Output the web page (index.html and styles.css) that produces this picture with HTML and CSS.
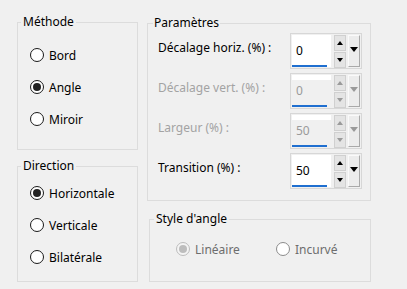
FILE: index.html
```html
<!DOCTYPE html>
<html lang="fr">
<head>
  <meta charset="UTF-8">
  <title>Dégradé - Paramètres</title>
  <link rel="stylesheet" href="styles.css">
</head>
<body>
  <div class="dialog">
    <!-- Colonne gauche -->
    <div class="col col-left">
      <fieldset class="group methode">
        <legend>Méthode</legend>
        <div class="radio-list">
          <label class="option"><span class="radio"></span>Bord</label>
          <label class="option"><span class="radio on"></span>Angle</label>
          <label class="option"><span class="radio"></span>Miroir</label>
        </div>
      </fieldset>

      <fieldset class="group direction">
        <legend>Direction</legend>
        <div class="radio-list">
          <label class="option"><span class="radio on"></span>Horizontale</label>
          <label class="option"><span class="radio"></span>Verticale</label>
          <label class="option"><span class="radio"></span>Bilatérale</label>
        </div>
      </fieldset>
    </div>

    <!-- Colonne droite -->
    <div class="col col-right">
      <fieldset class="group params">
        <legend>Paramètres</legend>
        <div class="rows">
          <div class="row">
            <span class="row-label">Décalage horiz. (%) :</span>
            <div class="spin">
              <div class="field"><span class="value">0</span><span class="underline"></span></div>
              <div class="arrows">
                <span class="arrow-btn"><span class="tri-up"></span></span>
                <span class="arrow-btn"><span class="tri-down"></span></span>
              </div>
              <div class="drop"><span class="tri-drop"></span></div>
            </div>
          </div>
          <div class="row disabled">
            <span class="row-label">Décalage vert. (%) :</span>
            <div class="spin">
              <div class="field"><span class="value">0</span><span class="underline"></span></div>
              <div class="arrows">
                <span class="arrow-btn"><span class="tri-up"></span></span>
                <span class="arrow-btn"><span class="tri-down"></span></span>
              </div>
              <div class="drop"><span class="tri-drop"></span></div>
            </div>
          </div>
          <div class="row disabled">
            <span class="row-label">Largeur (%) :</span>
            <div class="spin">
              <div class="field"><span class="value">50</span><span class="underline"></span></div>
              <div class="arrows">
                <span class="arrow-btn"><span class="tri-up"></span></span>
                <span class="arrow-btn"><span class="tri-down"></span></span>
              </div>
              <div class="drop"><span class="tri-drop"></span></div>
            </div>
          </div>
          <div class="row">
            <span class="row-label">Transition (%) :</span>
            <div class="spin">
              <div class="field"><span class="value">50</span><span class="underline"></span></div>
              <div class="arrows">
                <span class="arrow-btn"><span class="tri-up"></span></span>
                <span class="arrow-btn"><span class="tri-down"></span></span>
              </div>
              <div class="drop"><span class="tri-drop"></span></div>
            </div>
          </div>
        </div>
      </fieldset>

      <fieldset class="group style-angle">
        <legend>Style d'angle</legend>
        <div class="inline-options">
          <label class="option muted"><span class="radio on dim"></span>Linéaire</label>
          <label class="option muted"><span class="radio dim-empty"></span>Incurvé</label>
        </div>
      </fieldset>
    </div>
  </div>
</body>
</html>
```

FILE: styles.css
```css
/* Styles généraux */
* {
  box-sizing: border-box;
}

body {
  margin: 0;
  background-color: #f0f0f0;
  color: #000;
  font-family: "Noto Sans", "Open Sans", sans-serif;
  font-size: 12px;
}

.dialog {
  display: flex;
  gap: 9px;
  padding: 15px 0 0 17px;
}

.col {
  display: flex;
  flex-direction: column;
}

.col-left {
  width: 121px;
  gap: 9px;
}

.col-right {
  width: 224px;
  padding-top: 1px;
  gap: 11px;
}

/* Cadres de groupe */
.group {
  margin: 0;
  padding: 0 0 0 3px;
  border: 1px solid #dcdcdc;
  min-width: 0;
}

.group legend {
  padding: 0 2px;
  font-size: 12px;
  line-height: 14px;
}

.methode {
  height: 135px;
}

.methode .radio-list {
  padding-top: 10px;
}

.direction {
  height: 123px;
}

.direction .radio-list {
  padding-top: 4px;
}

.params {
  height: 185px;
  padding-left: 5px;
}

.params legend {
  padding: 0 1px;
}

.style-angle {
  height: 70px;
  margin-left: 2px;
  padding-left: 4px;
}

/* Boutons radio */
.radio-list {
  display: flex;
  flex-direction: column;
  padding-left: 9px;
}

.option {
  display: flex;
  align-items: center;
  gap: 5px;
  height: 32px;
}

.radio {
  width: 14px;
  height: 14px;
  border: 1px solid #1a1a1a;
  border-radius: 50%;
  background-color: #fff;
  display: flex;
  align-items: center;
  justify-content: center;
}

.radio.on::after {
  content: "";
  width: 8px;
  height: 8px;
  border-radius: 50%;
  background-color: #222;
}

.radio.dim {
  border-color: #bdbdbd;
  background-color: #f4f4f4;
}

.radio.dim::after {
  background-color: #bdbdbd;
}

.radio.dim-empty {
  border-color: #8c8c8c;
}

.option.muted {
  color: #6d6d6d;
}

.inline-options {
  display: grid;
  grid-template-columns: 100px 100px;
  padding: 7px 0 0 22px;
}

/* Lignes de paramètres */
.rows {
  display: flex;
  flex-direction: column;
  gap: 4px;
  padding-top: 3px;
}

.row {
  display: flex;
  align-items: center;
  justify-content: space-between;
  padding-left: 5px;
  padding-right: 8px;
}

.row-label {
  padding-bottom: 8px;
}

.row.disabled .row-label {
  color: #a3a3a3;
}

/* Champ numérique */
.spin {
  display: flex;
  align-items: flex-start;
  width: 72px;
  height: 36px;
  padding: 1px;
  border: 1px solid #d7d7d7;
  background-color: #f0f0f0;
}

.field {
  width: 41px;
  height: 32px;
  background-color: #fff;
  display: flex;
  flex-direction: column;
  justify-content: flex-end;
  padding-left: 4px;
}

.value {
  line-height: 16px;
  padding-bottom: 6px;
}

.underline {
  width: 35px;
  height: 2px;
  margin-left: -4px;
  background-color: #1f6fd0;
}

.row.disabled .field {
  background: linear-gradient(#fff 0, #fff 5px, #f0f0f0 5px);
}

.row.disabled .value {
  color: #9a9a9a;
}

.arrows {
  display: flex;
  flex-direction: column;
  gap: 1px;
  margin-left: 3px;
}

.arrow-btn {
  width: 12px;
  height: 16px;
  background-color: #e4e4e4;
  border: 1px solid #d0d0d0;
  display: flex;
  align-items: center;
  justify-content: center;
}

.tri-up {
  border-left: 3px solid transparent;
  border-right: 3px solid transparent;
  border-bottom: 4px solid #000;
}

.tri-down {
  border-left: 3px solid transparent;
  border-right: 3px solid transparent;
  border-top: 4px solid #000;
}

.drop {
  width: 13px;
  height: 32px;
  margin-left: 2px;
  background-color: #ececec;
  border: 1px solid #fafafa;
  border-right-color: #a9a9a9;
  border-bottom-color: #a9a9a9;
  display: flex;
  justify-content: center;
  padding-top: 11px;
}

.tri-drop {
  border-left: 4px solid transparent;
  border-right: 4px solid transparent;
  border-top: 5px solid #000;
  height: 0;
}

.row.disabled .tri-up {
  border-bottom-color: #9a9a9a;
}

.row.disabled .tri-down {
  border-top-color: #9a9a9a;
}

.row.disabled .tri-drop {
  border-top-color: #9a9a9a;
}
```
